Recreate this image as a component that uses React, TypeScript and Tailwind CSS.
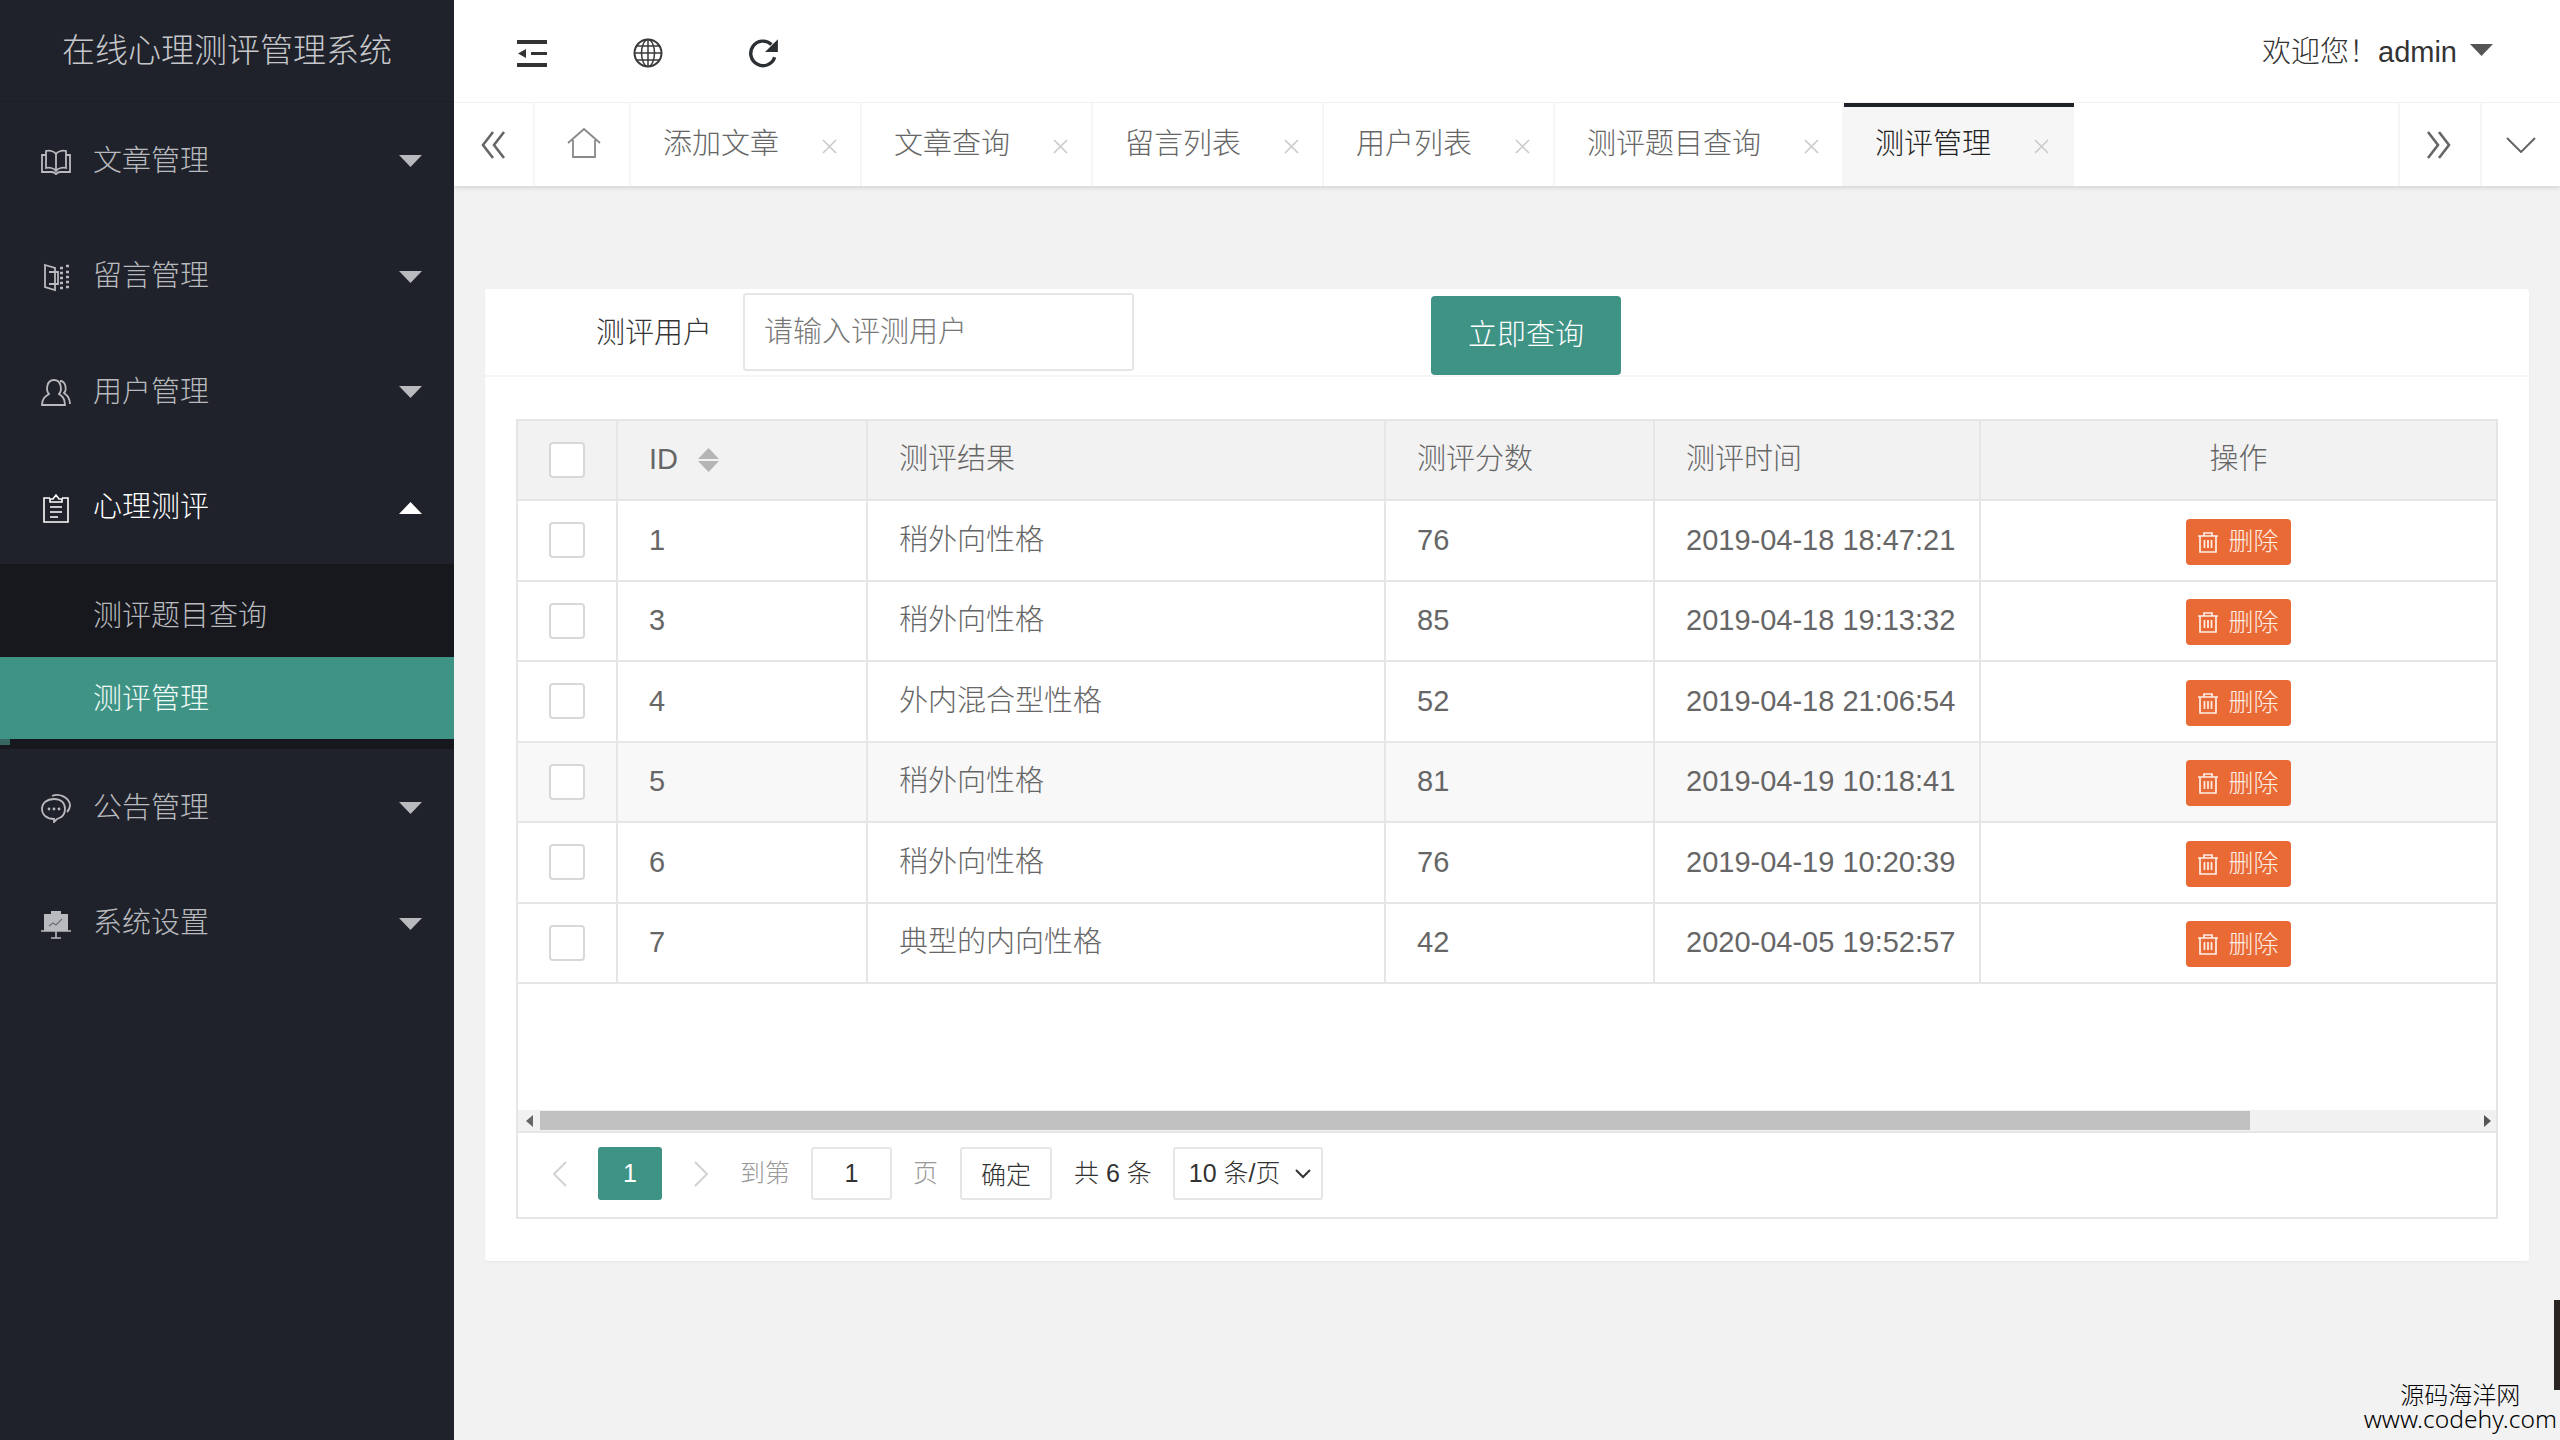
import type { ReactNode } from "react";

const BookIcon = () => (
  <svg viewBox="0 0 30 30" className="h-[30px] w-[30px]" fill="none" stroke="currentColor" strokeWidth="1.8">
    <path d="M15 8c-2-3-7-4-10-3v17c3-1 8 0 10 3 2-3 7-4 10-3V5c-3-1-8 0-10 3zM15 8v17" />
    <path d="M5 9H1v17h10c2 0 3 1 4 2 1-1 2-2 4-2h10V9h-4" />
  </svg>
);

const DoorIcon = () => (
  <svg viewBox="0 0 30 30" className="h-[30px] w-[30px]" fill="none" stroke="currentColor" strokeWidth="1.8">
    <path d="M4 3l10 3v22L4 25zM8 10h9v12H8" />
    <path d="M19 6h3M25 4h3M19 11h3M25 10h3M19 16h3M25 15h3M19 21h3M25 20h3M19 26h3M25 25h3" strokeWidth="2.4" />
  </svg>
);

const UserIcon = () => (
  <svg viewBox="0 0 30 30" className="h-[30px] w-[30px]" fill="none" stroke="currentColor" strokeWidth="1.8">
    <path d="M1 28c0-7 4-9 7-11-3-3-3-14 5-14s8 11 5 14c3 2 6 4 6 11z" />
    <path d="M19 4c6 0 7 9 4 12 3 2 6 5 6 11" />
  </svg>
);

const ClipboardIcon = () => (
  <svg viewBox="0 0 30 30" className="h-[30px] w-[30px]" fill="none" stroke="currentColor" strokeWidth="1.6">
    <path d="M9 5H3v24h24V5h-6M9 9V6h3l3-4 3 4h3v3zM9 14h12M9 19h12M9 24h8" />
  </svg>
);

const ChatIcon = () => (
  <svg viewBox="0 0 30 30" className="h-[30px] w-[30px]" fill="none" stroke="currentColor" strokeWidth="1.8">
    <path d="M13 26c-7 0-12-4-12-10S6 6 13 6s11 4 11 10-4 9-8 10l-3 3z" />
    <path d="M11 3c7-3 17 1 18 9 0 3-1 5-3 7" />
    <circle cx="8" cy="16" r="1.4" fill="currentColor" stroke="none" />
    <circle cx="13" cy="16" r="1.4" fill="currentColor" stroke="none" />
    <circle cx="18" cy="16" r="1.4" fill="currentColor" stroke="none" />
  </svg>
);

const BoardIcon = () => (
  <svg viewBox="0 0 30 30" className="h-[30px] w-[30px]">
    <path d="M10 2h10v3h7v17H3V5h7z" fill="currentColor" />
    <path d="M0 22h30M15 22v7M10 29h10" stroke="currentColor" strokeWidth="1.6" fill="none" />
    <path d="M8 17l4-3 3 2 6-6" stroke="#6b6d72" strokeWidth="1.1" fill="none" />
  </svg>
);

const Caret = ({ up = false, className = "" }: { up?: boolean; className?: string }) => (
  <svg viewBox="0 0 23 12" className={"h-[12px] w-[23px] " + className} fill="currentColor">
    <path d={up ? "M11.5 0L23 12H0z" : "M0 0h23L11.5 12z"} />
  </svg>
);

const CloseIcon = () => (
  <svg viewBox="0 0 17 15" className="mt-[4px] h-[15px] w-[17px] shrink-0" fill="none" stroke="#c9c9c9" strokeWidth="1.5">
    <path d="M2 1l13 13M15 1L2 14" />
  </svg>
);

const TrashIcon = () => (
  <svg viewBox="0 0 20 22" className="h-[22px] w-[20px]" fill="none" stroke="currentColor" strokeWidth="1.7">
    <path d="M0 5h20M6 5V2h8v3M2 5v16h16V5M6.5 9v8M10 9v8M13.5 9v8" />
  </svg>
);

const Chevron = ({ right = false }: { right?: boolean }) => (
  <svg viewBox="0 0 16 26" className="h-[26px] w-[16px] shrink-0" fill="none" stroke="#d2d2d2" strokeWidth="2">
    <path d={right ? "M2 1l12 12L2 25" : "M14 1L2 13l12 12"} />
  </svg>
);

const menus: { label: string; icon: ReactNode }[] = [
  { label: "文章管理", icon: <BookIcon /> },
  { label: "留言管理", icon: <DoorIcon /> },
  { label: "用户管理", icon: <UserIcon /> },
];

function MenuItem({ label, icon, open = false }: { label: string; icon: ReactNode; open?: boolean }) {
  return (
    <div className={"flex h-[115.5px] items-center pl-[41px] pr-[32px] pt-[3px] " + (open ? "text-white" : "text-[#b9babd]")}>
      {icon}
      <span className="ml-[22px] flex-1 text-[29px]">{label}</span>
      <Caret up={open} />
    </div>
  );
}

function Sidebar() {
  return (
    <aside className="flex w-[454px] shrink-0 flex-col bg-[#1f222b]">
      <div className="flex h-[102px] items-center justify-center border-b border-[#1b1e26] text-[33px] text-[#c6c7ca]">
        在线心理测评管理系统
      </div>
      {menus.map((m) => (
        <MenuItem key={m.label} label={m.label} icon={m.icon} />
      ))}
      <MenuItem label="心理测评" icon={<ClipboardIcon />} open />
      <div className="relative bg-[#16181e] pb-[10px] pt-[10px]">
        <div className="flex h-[83px] items-center pl-[93px] pt-[3px] text-[29px] text-[#b9babd]">测评题目查询</div>
        <div className="flex h-[82px] items-center bg-[#3f9385] pl-[93px] pt-[3px] text-[29px] text-[#effaf6]">测评管理</div>
        <div className="absolute bottom-[4px] left-0 h-[6px] w-[10px] bg-[#35665f]" />
      </div>
      <MenuItem label="公告管理" icon={<ChatIcon />} />
      <MenuItem label="系统设置" icon={<BoardIcon />} />
    </aside>
  );
}

function TopBar() {
  return (
    <header className="flex h-[103px] shrink-0 items-center border-b border-[#f4f4f4] bg-white pl-[63px] pr-[67px] pt-[4px]">
      <svg viewBox="0 0 30 27" className="h-[27px] w-[30px]" fill="#333">
        <path d="M0 0h30v4H0zM14 12h16v3H14zM0 23h30v4H0zM1 13.5L9 9v9z" />
      </svg>
      <svg viewBox="0 0 30 30" className="ml-[86px] h-[30px] w-[30px]" fill="none" stroke="#3a3a3a" strokeWidth="1.5">
        <circle cx="15" cy="15" r="13.5" strokeWidth="2" />
        <ellipse cx="15" cy="15" rx="6.5" ry="13.5" />
        <path d="M15 1v28M1.5 15h27M3.5 8h23M3.5 22h23" />
      </svg>
      <svg viewBox="0 0 30 30" className="ml-[85px] h-[32px] w-[32px]" fill="none">
        <path d="M25 19a11.5 11.5 0 1 1-3-12" stroke="#2b2f33" strokeWidth="3.2" />
        <path d="M28 2v12H16z" fill="#2b2f33" />
      </svg>
      <div className="ml-auto flex items-center text-[29px] text-[#333]">
        <span>欢迎您！</span>
        <span>admin</span>
        <Caret className="mb-[6px] ml-[13px] text-[#555]" />
      </div>
    </header>
  );
}

const tabs = ["添加文章", "文章查询", "留言列表", "用户列表", "测评题目查询"];

function TabBar() {
  return (
    <div className="relative flex h-[83px] shrink-0 bg-white text-[29px] text-[#666] shadow-[0_2px_4px_rgba(0,0,0,0.12)]">
      <div className="flex w-[81px] shrink-0 items-center justify-center border-r-2 border-[#f6f6f6]">
        <svg viewBox="0 0 28 28" className="ml-[1px] h-[28px] w-[28px]" fill="none" stroke="#666" strokeWidth="2.6">
          <path d="M13 1L3 14l10 13M24 1L14 14l10 13" />
        </svg>
      </div>
      <div className="flex w-[96px] shrink-0 items-center justify-center border-r-2 border-[#f6f6f6] pb-[3px] pl-[3px]">
        <svg viewBox="0 0 34 30" className="h-[30px] w-[34px]" fill="none" stroke="#888" strokeWidth="1.8">
          <path d="M1 15L17 1l16 14M6 12v17h22V12" />
        </svg>
      </div>
      {tabs.map((t) => (
        <div key={t} className="flex shrink-0 items-center border-r-2 border-[#f6f6f6] pl-[32px] pr-[22px]">
          <span>{t}</span>
          <span className="ml-[42px] flex"><CloseIcon /></span>
        </div>
      ))}
      <div className="flex shrink-0 items-center border-t-4 border-[#20222a] bg-[#f6f6f6] pb-[4px] pl-[31px] pr-[24px] text-[#222]">
        <span>测评管理</span>
        <span className="ml-[42px] flex"><CloseIcon /></span>
      </div>
      <div className="flex-1" />
      <div className="flex w-[82px] shrink-0 items-center justify-center border-l-2 border-[#f6f6f6] pr-[5px]">
        <svg viewBox="0 0 28 28" className="h-[28px] w-[28px]" fill="none" stroke="#666" strokeWidth="2.6">
          <path d="M4 1l10 13L4 27M15 1l10 13-10 13" />
        </svg>
      </div>
      <div className="flex w-[80px] shrink-0 items-center justify-center border-l-2 border-[#f6f6f6]">
        <svg viewBox="0 0 30 16" className="h-[16px] w-[30px]" fill="none" stroke="#666" strokeWidth="2">
          <path d="M1 1l14 14L29 1" />
        </svg>
      </div>
    </div>
  );
}

const rows = [
  { id: 1, result: "稍外向性格", score: 76, time: "2019-04-18 18:47:21" },
  { id: 3, result: "稍外向性格", score: 85, time: "2019-04-18 19:13:32" },
  { id: 4, result: "外内混合型性格", score: 52, time: "2019-04-18 21:06:54" },
  { id: 5, result: "稍外向性格", score: 81, time: "2019-04-19 10:18:41" },
  { id: 6, result: "稍外向性格", score: 76, time: "2019-04-19 10:20:39" },
  { id: 7, result: "典型的内向性格", score: 42, time: "2020-04-05 19:52:57" },
];

const Checkbox = () => (
  <div className="mx-auto h-[36px] w-[36px] rounded-[4px] border-2 border-[#d8d8d8] bg-white" />
);

const cell = "border-b-2 border-r-2 border-[#e6e6e6] pl-[31px] text-left font-light";

function DataTable() {
  return (
    <table className="w-[1978px] table-fixed border-collapse text-[29px] text-[#666]">
      <colgroup>
        <col className="w-[99px]" />
        <col className="w-[250px]" />
        <col className="w-[518px]" />
        <col className="w-[269px]" />
        <col className="w-[326px]" />
        <col className="w-[516px]" />
      </colgroup>
      <thead>
        <tr className="h-[79px] bg-[#f2f2f2]">
          <th className="relative z-10 border-b-2 border-r-2 border-[#e6e6e6] bg-[#f2f2f2] shadow-[4px_0_8px_-2px_rgba(0,0,0,0.07)]">
            <Checkbox />
          </th>
          <th className={cell}>
            <div className="flex items-center">
              ID
              <svg viewBox="0 0 21 24" className="ml-[20px] h-[24px] w-[21px]" fill="#b5b5b5">
                <path d="M10.5 0L21 11H0zM0 13h21L10.5 24z" />
              </svg>
            </div>
          </th>
          <th className={cell}>测评结果</th>
          <th className={cell}>测评分数</th>
          <th className={cell}>测评时间</th>
          <th className="relative z-10 border-b-2 border-[#e6e6e6] bg-[#f2f2f2] text-center font-light shadow-[-4px_0_8px_-2px_rgba(0,0,0,0.07)]">
            操作
          </th>
        </tr>
      </thead>
      <tbody>
        {rows.map((r) => (
          <tr key={r.id} className={"h-[80.5px] " + (r.id === 5 ? "bg-[#f8f8f8]" : "bg-white")}>
            <td className={"relative z-10 border-b-2 border-r-2 border-[#e6e6e6] shadow-[4px_0_8px_-2px_rgba(0,0,0,0.07)] " + (r.id === 5 ? "bg-[#f8f8f8]" : "bg-white")}>
              <Checkbox />
            </td>
            <td className={cell}>{r.id}</td>
            <td className={cell}>{r.result}</td>
            <td className={cell}>{r.score}</td>
            <td className={cell}>{r.time}</td>
            <td className={"relative z-10 border-b-2 border-[#e6e6e6] shadow-[-4px_0_8px_-2px_rgba(0,0,0,0.07)] " + (r.id === 5 ? "bg-[#f8f8f8]" : "bg-white")}>
              <div className="mx-auto mt-[3px] flex h-[46px] w-[105px] items-center justify-center rounded-[4px] bg-[#ea6a36] text-[25px] text-[#fdeee6]">
                <TrashIcon />
                <span className="ml-[10px]">删除</span>
              </div>
            </td>
          </tr>
        ))}
      </tbody>
    </table>
  );
}

function ScrollBar() {
  return (
    <div className="flex h-[21px] shrink-0 items-center bg-[#f1f1f1]">
      <div className="flex w-[22px] shrink-0 justify-center">
        <svg viewBox="0 0 7 12" className="h-[12px] w-[7px]" fill="#666"><path d="M7 0v12L0 6z" /></svg>
      </div>
      <div className="h-[19px] w-[1710px] bg-[#c1c1c1]" />
      <div className="flex-1" />
      <svg viewBox="0 0 7 12" className="mr-[5px] h-[12px] w-[7px]" fill="#555"><path d="M0 0v12l7-6z" /></svg>
    </div>
  );
}

const box = "flex h-[53px] shrink-0 items-center justify-center rounded-[3px] border-2 border-[#e6e6e6] text-[25px] text-[#333]";

function Pagination() {
  return (
    <div className="flex h-[86px] shrink-0 items-center border-t-2 border-[#e6e6e6] pb-[3px] pl-[34px] text-[25px]">
      <Chevron />
      <div className="ml-[30px] flex h-[53px] w-[64px] items-center justify-center rounded-[3px] bg-[#3f9385] text-white">1</div>
      <div className="ml-[31px]"><Chevron right /></div>
      <span className="ml-[31px] text-[#999]">到第</span>
      <div className={box + " ml-[21px] w-[81px]"}>1</div>
      <span className="ml-[21px] text-[#999]">页</span>
      <div className={box + " ml-[22px] w-[92px] pt-[4px]"}>确定</div>
      <span className="ml-[22px] text-[#333]">共 6 条</span>
      <div className={box + " ml-[21px] w-[150px] !justify-start pl-[14px]"}>
        <span>10 条/页</span>
        <svg viewBox="0 0 16 10" className="ml-[14px] h-[10px] w-[16px]" fill="none" stroke="#333" strokeWidth="2">
          <path d="M1 1l7 7 7-7" />
        </svg>
      </div>
    </div>
  );
}

export default function App() {
  return (
    <div className="relative flex h-[1440px] w-[2560px] overflow-hidden bg-[#f2f2f2] font-light [font-family:'Liberation_Sans','Noto_Sans_CJK_SC',sans-serif]">
      <Sidebar />
      <main className="flex min-w-0 flex-1 flex-col">
        <TopBar />
        <TabBar />
        <div className="px-[31px] pt-[103px]">
          <section className="h-[972px] rounded-[3px] bg-white shadow-[0_1px_2px_rgba(0,0,0,0.05)]">
            <div className="flex h-[88px] items-center border-b-2 border-[#f6f6f6] pl-[111px]">
              <span className="pt-[3px] text-[29px] text-[#333]">测评用户</span>
              <div className="ml-[31px] flex h-[78px] w-[391px] items-center rounded-[3px] border-2 border-[#e6e6e6] pl-[19px] pt-[2px] text-[29px] text-[#777]">
                请输入评测用户
              </div>
              <div className="ml-[297px] mt-[7px] flex h-[79px] w-[190px] items-center justify-center rounded-[4px] bg-[#3f9385] text-[29px] text-white">
                立即查询
              </div>
            </div>
            <div className="ml-[31px] mt-[42px] flex h-[800px] w-[1982px] flex-col border-2 border-[#e6e6e6]">
              <DataTable />
              <div className="flex-1" />
              <ScrollBar />
              <Pagination />
            </div>
          </section>
        </div>
      </main>
      <div className="absolute right-0 top-[1300px] h-[90px] w-[6px] bg-[#2a2522]" />
      <div className="absolute bottom-[8px] right-[3px] flex flex-col items-center text-black">
        <span className="text-[24px] leading-[20px]">源码海洋网</span>
        <span className="text-[24.6px] leading-[26px] [font-family:'Noto_Sans',sans-serif]">www.codehy.com</span>
      </div>
    </div>
  );
}
